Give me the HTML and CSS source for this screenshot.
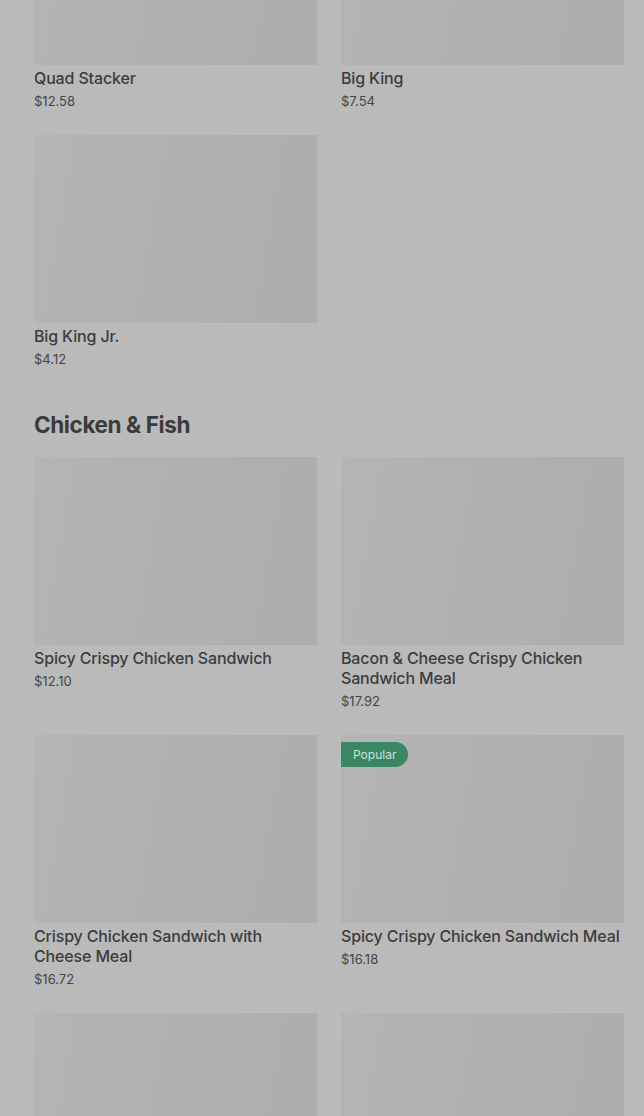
FILE: index.html
```html
<!DOCTYPE html>
<html>
<head>
<meta charset="utf-8">
<link rel="stylesheet" href="styles.css">
<title>Menu</title>
<meta name="viewport" content="width=device-width, initial-scale=1">
</head>
<body>
	<div class="menu">

		<div class="grid">
			<div class="item">
				<div class="photo"></div>
				<div class="name">Quad Stacker</div>
				<div class="price">$12.58</div>
			</div>
			<div class="item">
				<div class="photo"></div>
				<div class="name">Big King</div>
				<div class="price">$7.54</div>
			</div>
			<div class="item">
				<div class="photo"></div>
				<div class="name">Big King Jr.</div>
				<div class="price">$4.12</div>
			</div>
		</div>

		<h2 class="section">Chicken &amp; Fish</h2>

		<div class="grid">
			<div class="item">
				<div class="photo"></div>
				<div class="name">Spicy Crispy Chicken Sandwich</div>
				<div class="price">$12.10</div>
			</div>
			<div class="item">
				<div class="photo"></div>
				<div class="name">Bacon &amp; Cheese Crispy Chicken Sandwich Meal</div>
				<div class="price">$17.92</div>
			</div>
			<div class="item">
				<div class="photo"></div>
				<div class="name">Crispy Chicken Sandwich with Cheese Meal</div>
				<div class="price">$16.72</div>
			</div>
			<div class="item">
				<div class="photo">
					<span class="badge">Popular</span>
				</div>
				<div class="name">Spicy Crispy Chicken Sandwich Meal</div>
				<div class="price">$16.18</div>
			</div>
			<div class="item">
				<div class="photo"></div>
			</div>
			<div class="item">
				<div class="photo"></div>
			</div>
		</div>

	</div>
</body>
</html>
```

FILE: styles.css
```css
* {
	box-sizing: border-box;
}

html, body {
	height: 100%;
	overflow: hidden;
}

body {
	margin: 0;
	background: #bababa;
	color: #3c3c3c;
	font-family: Inter, "Liberation Sans", sans-serif;
}

/* page is scrolled part way down */
.menu {
	padding: 0 20px 0 34px;
	margin-top: -123px;
}

.grid {
	display: grid;
	grid-template-columns: 1fr 1fr;
	column-gap: 24px;
	row-gap: 24px;
}

.photo {
	position: relative;
	height: 188px;
	background: linear-gradient(100deg, #b4b4b4 0%, #b0b0b0 50%, #adadad 100%);
}

.name {
	margin-top: 3px;
	font-size: 16px;
	font-weight: 500;
	line-height: 20px;
	letter-spacing: -0.15px;
}

.price {
	margin-top: 3px;
	font-size: 13px;
	line-height: 20px;
	color: #454545;
}

.section {
	margin: 42px 0 18px;
	font-size: 22.5px;
	font-weight: 700;
	line-height: 28px;
	letter-spacing: -0.4px;
	color: #3a3a3a;
}

.badge {
	position: absolute;
	top: 7px;
	left: 0;
	padding: 0 12px;
	height: 25px;
	line-height: 25px;
	font-size: 12px;
	color: #cfe0d6;
	background: #3a8763;
	border-radius: 0 13px 13px 0;
}
```
